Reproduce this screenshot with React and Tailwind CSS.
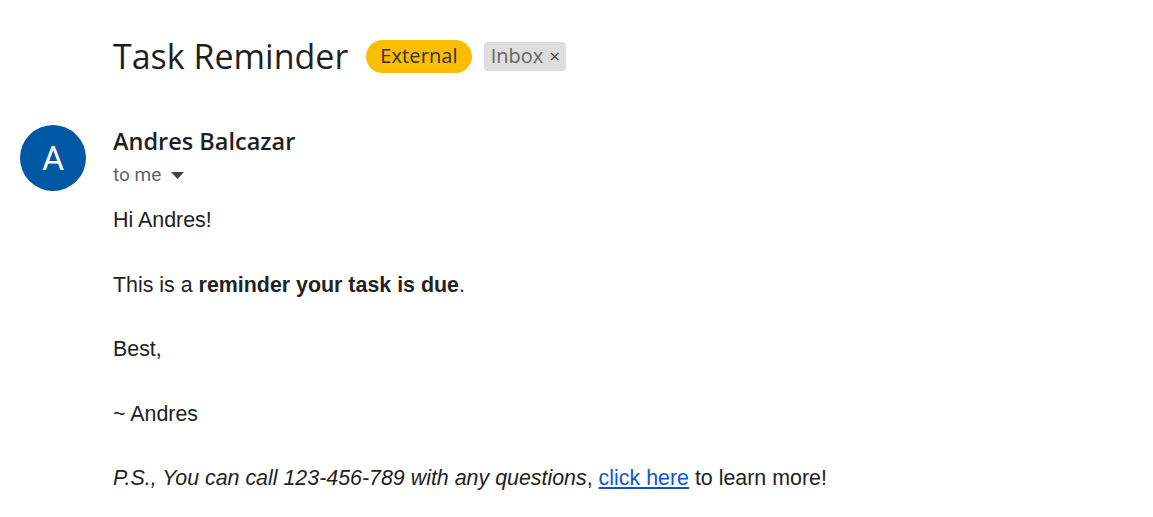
export default function App() {
  return (
    <div className="min-h-screen bg-white text-[#222]">
      <div className="pl-[113px] pt-[36px] flex items-center">
        <h1 className="text-[34px] leading-[40px] text-[#1f1f1f]" style={{ fontFamily: '"Open Sans", Roboto, sans-serif' }}>
          Task Reminder
        </h1>
        <span className="ml-[18px] h-[33px] px-[14px] flex items-center rounded-full bg-[#fbbc04] text-[20px] tracking-[0.1px] text-[#333]" style={{ fontFamily: '"Open Sans", Roboto, sans-serif' }}>
          External
        </span>
        <span className="ml-[12px] h-[29px] pl-[7px] pr-[6px] flex items-center rounded-[4px] bg-[#dddddd] text-[20px] text-[#666]" style={{ fontFamily: '"Open Sans", Roboto, sans-serif' }}>
          Inbox
          <span className="ml-[6px] text-[19px] text-[#444]">×</span>
        </span>
      </div>

      <div className="flex mt-[49px] pl-[20px]">
        <div className="w-[66px] h-[66px] rounded-full bg-[#0058a4] flex items-center justify-center text-white text-[34px] shrink-0" style={{ fontFamily: 'Roboto, sans-serif' }}>
          A
        </div>
        <div className="ml-[27px]" style={{ fontFamily: '"Liberation Sans", Arial, sans-serif' }}>
          <div className="text-[23.5px] text-[#1f1f1f] leading-[30px] mt-[1px]" style={{ fontFamily: '"Open Sans", Roboto, sans-serif', fontWeight: 600 }}>
            Andres Balcazar
          </div>
          <div className="flex items-center text-[19px] text-[#5f6368] leading-[30px] mt-[4px]" style={{ fontFamily: 'Roboto, sans-serif' }}>
            to me
            <svg className="ml-[10px]" width="13" height="7" viewBox="0 0 13 7">
              <path d="M0 0 L6.5 7 L13 0 Z" fill="#444" />
            </svg>
          </div>
          <div className="text-[21.4px] leading-[32px] text-[#222] mt-[14px]">
            <p>Hi Andres!</p>
            <p className="mt-[32.5px]">This is a <b>reminder your task is due</b>.</p>
            <p className="mt-[32.5px]">Best,</p>
            <p className="mt-[32.5px]">~ Andres</p>
            <p className="mt-[32.5px]">
              <i>P.S., You can call 123-456-789 with any questions</i>,{' '}
              <a href="#" className="text-[#1155cc] underline">click here</a> to learn more!
            </p>
          </div>
        </div>
      </div>
    </div>
  )
}
